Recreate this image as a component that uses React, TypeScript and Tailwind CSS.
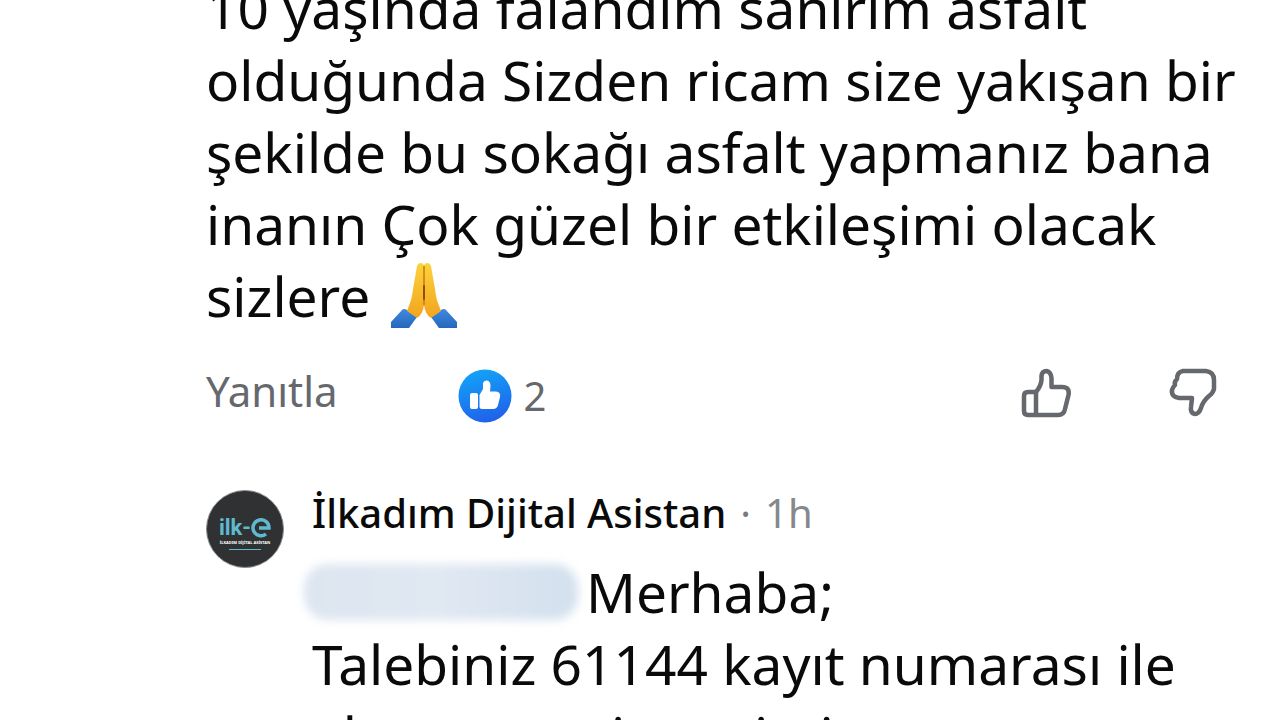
import type { ReactNode } from 'react';

const question = [
  '10 yaşında falandım sanırım asfalt',
  'olduğunda Sizden ricam size yakışan bir',
  'şekilde bu sokağı asfalt yapmanız bana',
  'inanın Çok güzel bir etkileşimi olacak',
];

function PrayIcon() {
  return (
    <svg viewBox="0 0 68 68" className="h-17 w-17" role="img" aria-label="🙏">
      <defs>
        <linearGradient id="hand" x1="0" y1="0" x2="0" y2="1">
          <stop offset="0" stopColor="#fcd23b" />
          <stop offset="1" stopColor="#f3a51e" />
        </linearGradient>
        <linearGradient id="cuff" x1="0" y1="0" x2="0" y2="1">
          <stop offset="0" stopColor="#3f8ae0" />
          <stop offset="1" stopColor="#2368bd" />
        </linearGradient>
      </defs>
      <path d="M1 66V60L12 48Q14 46 17 48L27 55L19 66Z" fill="url(#cuff)" />
      <path d="M67 66V60L56 48Q54 46 51 48L41 55L49 66Z" fill="url(#cuff)" />
      <path d="M34 3Q32 0 29 1.5Q27 2 26.5 7L23 27Q22 36 20 41L17 49L27 56Q33 52 34 43Z" fill="url(#hand)" />
      <path d="M34 3Q36 0 39 1.5Q41 2 41.5 7L45 27Q46 36 48 41L51 49L41 56Q35 52 34 43Z" fill="url(#hand)" />
      <path d="M34 4V43" stroke="#c67a14" strokeWidth="1.5" />
      <path d="M34 24V37" stroke="#8f4d0c" strokeWidth="2" strokeLinecap="round" />
    </svg>
  );
}

function LikeBadge() {
  return (
    <svg viewBox="0 0 54 54" className="h-[54px] w-[54px]" aria-hidden="true">
      <defs>
        <linearGradient id="like" x1="0.3" y1="0" x2="0.6" y2="1">
          <stop offset="0" stopColor="#12a4f8" />
          <stop offset="1" stopColor="#2060ea" />
        </linearGradient>
      </defs>
      <circle cx="27" cy="27" r="26.5" fill="url(#like)" />
      <rect x="12" y="24" width="8" height="16" rx="2" fill="#fff" />
      <path
        d="M21.5 26L25 20V14Q26 11 29 11.5Q32.500 12 32.500 17L32 22.5H38Q43 23 42 28L40 36Q39 40 35 40H24Q21.5 40 21.5 38Z"
        fill="#fff"
      />
    </svg>
  );
}

function ThumbUp() {
  return (
    <svg viewBox="0 0 52 52" className="h-13 w-13" fill="none" stroke="#65686c" strokeWidth="4.5" strokeLinejoin="round" aria-hidden="true">
      <path d="M16 24H8Q4 24 4 28V43Q4 47 8 47H16Z" />
      <path d="M16 24Q21 18 21.5 12V8Q22 3 26.5 3Q31 4 31.5 10V19H42Q50 19 48.5 27L45 41Q44 47 38 47H16" />
    </svg>
  );
}

function ThumbDown() {
  return (
    <svg viewBox="0 0 52 52" className="h-13 w-13" fill="none" stroke="#65686c" strokeWidth="4.5" strokeLinejoin="round" aria-hidden="true">
      <path d="M15 3H38Q46 4 46 12V21Q45 25 41 28Q35 33 33 40Q31 46 27 46Q22 45 23 39L24 30H11Q3 29 4 22Q5 19 7 17Q6 14 9 11Q9 4 15 3Z" />
    </svg>
  );
}

function Avatar() {
  return (
    <div className="flex h-[78px] w-[78px] shrink-0 flex-col items-center rounded-full border border-[#8b8d90] bg-[#303133] pt-6">
      <div className="flex items-center text-[#5fb9cf]">
        <span className="font-['Roboto',sans-serif] text-[22px] leading-[26px] font-bold">ilk-</span>
        <svg viewBox="0 0 20 20" className="h-5 w-5" fill="none" stroke="currentColor" strokeWidth="3.5" aria-hidden="true">
          <path d="M8 10H18A8 8 0 1 0 15 16" />
        </svg>
      </div>
      <span className="text-[4px] leading-[4px] font-bold whitespace-nowrap text-white">İLKADIM DİJİTAL ASİSTAN</span>
      <div className="mt-1 h-px w-8 bg-[#5fb9cf]" />
    </div>
  );
}

function Line({ children }: { children: ReactNode }) {
  return <span className="block whitespace-nowrap">{children}</span>;
}

export default function App() {
  return (
    <main className="h-screen overflow-hidden bg-white font-['Noto_Sans',sans-serif] text-[#0a0a0a]">
      <article className="-mt-7 pr-15 pl-[206px]">
        <p className="text-[55px] leading-[72px]">
          {question.map((line) => (
            <Line key={line}>{line}</Line>
          ))}
          <span className="flex items-center gap-5">
            sizlere <PrayIcon />
          </span>
        </p>

        <div className="mt-7 flex h-16 items-center text-[#65686c]">
          <button type="button" className="pb-1 text-[42px]">
            Yanıtla
          </button>
          <button type="button" className="ml-30 flex items-center gap-3 pt-2 text-[40px]" aria-label="2 beğeni">
            <LikeBadge />2
          </button>
          <div className="ml-auto flex gap-24 pt-1">
            <button type="button" aria-label="Beğen">
              <ThumbUp />
            </button>
            <button type="button" aria-label="Beğenme">
              <ThumbDown />
            </button>
          </div>
        </div>

        <section className="mt-[66px] flex gap-7">
          <Avatar />
          <div>
            <h2 className="flex gap-[14px] text-[40px] leading-[46px] whitespace-nowrap">
              <span className="font-medium">İlkadım Dijital Asistan</span>
              <span className="text-[#77797d]">·</span>
              <span className="text-[#85888c]">1h</span>
            </h2>
            <p className="mt-5 text-[55px] leading-[72px]">
              <span className="flex items-center gap-2">
                <span className="-ml-2 h-14 w-[274px] rounded-3xl bg-linear-to-r from-[#dde5f0] via-[#e0e8f2] to-[#d3e0ee] blur-[5px]" />
                Merhaba;
              </span>
              <Line>Talebiniz 61144 kayıt numarası ile</Line>
              <Line>alınmış ve sistemimiz</Line>
            </p>
          </div>
        </section>
      </article>
    </main>
  );
}
